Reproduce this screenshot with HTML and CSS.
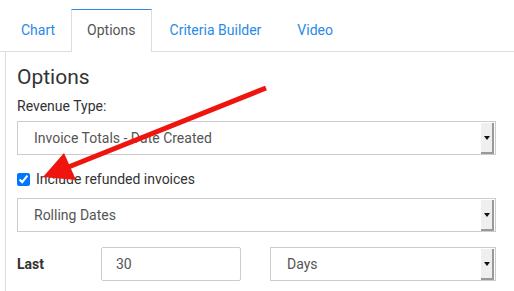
FILE: index.html
```html
<!DOCTYPE html>
<html lang="en">
<head>
    <meta charset="UTF-8">
    <meta name="viewport" content="width=device-width, initial-scale=1.0">
    <title>Options</title>
    <link rel="stylesheet" href="styles.css">
</head>
<body>
    <ul class="tabs">
        <li><a href="#">Chart</a></li>
        <li class="active"><a href="#">Options</a></li>
        <li><a href="#">Criteria Builder</a></li>
        <li><a href="#">Video</a></li>
    </ul>

    <div class="panel">
        <h1>Options</h1>
        <p class="label">Revenue Type:</p>
        <div class="select">
            <span>Invoice Totals - Date Created</span>
            <span class="caret"></span>
        </div>

        <label class="check">
            <input type="checkbox" checked>
            Include refunded invoices
        </label>

        <div class="select">
            <span>Rolling Dates</span>
            <span class="caret"></span>
        </div>

        <div class="last-row">
            <b>Last</b>
            <div class="text-box">30</div>
            <div class="select days">
                <span>Days</span>
                <span class="caret"></span>
            </div>
        </div>
    </div>

    <!-- annotation arrow -->
    <svg class="arrow" width="514" height="291" viewBox="0 0 514 291">
        <line x1="266" y1="88" x2="66" y2="168" stroke="#f0140f" stroke-width="5"/>
        <polygon points="43,177 64,153 76,180" fill="#f0140f"/>
    </svg>
</body>
</html>
```

FILE: styles.css
```css
body {
    margin: 0;
    font-family: Roboto, "Noto Sans", sans-serif;
    color: #333;
    background: #fff;
}
.tabs {
    list-style: none;
    margin: 9px 0 0 0;
    padding: 0 0 0 5px;
    display: flex;
    border-bottom: 1px solid #ddd;
}
.tabs li {
    height: 41px;
    margin-bottom: -1px;
    border: 1px solid transparent;
    border-bottom: none;
}
.tabs a {
    display: block;
    padding: 11px 15px 0;
    font-size: 14px;
    line-height: 18px;
    color: #2a8ae6;
    text-decoration: none;
}
.tabs li:nth-child(3) a,
.tabs li:nth-child(4) a {
    padding: 11px 17px 0;
}
.tabs li.active {
    border-color: #ddd;
    border-top-color: #2a8ae6;
    background: #fff;
    height: 42px;
}
.tabs li.active a {
    color: #555;
}
.panel {
    border-left: 1px solid #ddd;
    margin-left: 5px;
    padding: 12px 18px 20px 11px;
}
h1 {
    margin: 0;
    font-size: 21px;
    font-weight: 400;
    line-height: 26px;
}
.label {
    margin: 7px 0 6px;
    font-size: 14px;
    line-height: 18px;
}
.select {
    display: flex;
    align-items: center;
    height: 32px;
    border: 1px solid #ccc;
    background: #fff;
    font-size: 14px;
    color: #555;
}
.select span:first-child {
    flex: 1;
    padding-left: 16px;
}
.caret {
    width: 11px;
    height: 29px;
    margin-right: 1px;
    background: #efefef;
    border-right: 2px solid #999;
    border-bottom: 2px solid #999;
    position: relative;
}
.caret::after {
    content: "";
    position: absolute;
    left: 3px;
    top: 13px;
    border-left: 3px solid transparent;
    border-right: 3px solid transparent;
    border-top: 4px solid #111;
}
.check {
    display: flex;
    align-items: center;
    gap: 6px;
    margin: 16px 0 11px;
    font-size: 14px;
}
.check input {
    margin: 0;
    width: 13px;
    height: 13px;
}
.last-row {
    display: flex;
    align-items: center;
    margin-top: 15px;
}
.last-row b {
    width: 84px;
    font-size: 14px;
}
.text-box {
    width: 124px;
    height: 32px;
    line-height: 32px;
    border: 1px solid #ccc;
    border-radius: 2px;
    padding-left: 14px;
    font-size: 14px;
    color: #555;
}
.days {
    flex: 1;
    margin-left: 29px;
}
.arrow {
    position: absolute;
    left: 0;
    top: 0;
    pointer-events: none;
}
```
